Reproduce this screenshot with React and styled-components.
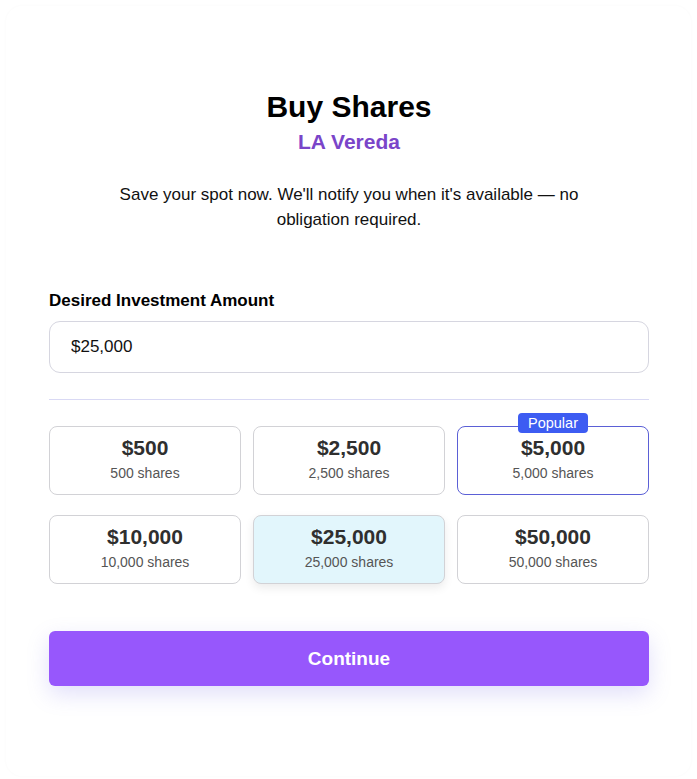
import React, { useState } from "react";
import styled, { createGlobalStyle } from "styled-components";

const GlobalStyle = createGlobalStyle`
  * { box-sizing: border-box; }
  body {
    margin: 0;
    background: #ffffff;
    font-family: "Liberation Sans", Arial, sans-serif;
    color: #111;
  }
`;

const Page = styled.div`
  width: 697px;
  min-height: 779px;
  padding: 6px;
`;

const Card = styled.div`
  border-radius: 16px;
  box-shadow: 0 0 3px rgba(0, 0, 0, 0.03);
  padding: 84px 42px 90px 43px;
  min-height: 767px;
`;

const Header = styled.div`
  display: flex;
  flex-direction: column;
  align-items: center;
  text-align: center;
`;

const Title = styled.h1`
  margin: 0;
  font-size: 30px;
  line-height: 34px;
  font-weight: 700;
  color: #000;
`;

const Subtitle = styled.h2`
  margin: 6px 0 0;
  font-size: 21px;
  line-height: 24px;
  font-weight: 700;
  color: #7a45c9;
`;

const Intro = styled.p`
  margin: 28px 0 0;
  max-width: 500px;
  font-size: 17px;
  line-height: 25px;
  color: #111;
`;

const Label = styled.label`
  display: block;
  margin-top: 59px;
  font-size: 17px;
  line-height: 20px;
  font-weight: 700;
  color: #000;
`;

const Input = styled.input`
  display: block;
  width: 100%;
  height: 52px;
  margin-top: 10px;
  padding: 0 21px;
  border: 1px solid #d6d6e0;
  border-radius: 11px;
  font-family: inherit;
  font-size: 17px;
  color: #111;
  outline: none;
`;

const Divider = styled.hr`
  margin: 26px 0 26px;
  border: 0;
  border-top: 1px solid #d9d9f4;
`;

const Grid = styled.div`
  display: grid;
  grid-template-columns: repeat(3, 1fr);
  column-gap: 12px;
  row-gap: 20px;
`;

const Option = styled.button`
  position: relative;
  height: 69px;
  display: flex;
  flex-direction: column;
  align-items: center;
  justify-content: center;
  gap: 5px;
  padding: 0 0 4px;
  border-radius: 8px;
  font-family: inherit;
  cursor: pointer;
  border: 1px solid ${({ $popular }) => ($popular ? "#5b60d6" : "#d2d2d6")};
  background: ${({ $selected }) => ($selected ? "#e2f6fc" : "#ffffff")};
  box-shadow: ${({ $selected }) =>
    $selected ? "0 4px 10px rgba(0, 0, 0, 0.08)" : "none"};
`;

const Amount = styled.span`
  font-size: 21px;
  line-height: 24px;
  font-weight: 700;
  color: #2f2f2f;
`;

const Shares = styled.span`
  font-size: 14px;
  line-height: 16px;
  color: #555;
`;

const Badge = styled.span`
  position: absolute;
  top: -14px;
  left: 50%;
  transform: translateX(-50%);
  padding: 2px 10px;
  border-radius: 4px;
  background: #3d5cf2;
  color: #fff;
  font-size: 14.5px;
  line-height: 16px;
`;

const Continue = styled.button`
  display: block;
  width: 100%;
  height: 55px;
  margin-top: 47px;
  border: 0;
  border-radius: 6px;
  background: #9757fc;
  color: #fff;
  font-family: inherit;
  font-size: 19px;
  font-weight: 700;
  cursor: pointer;
  box-shadow: 0 8px 22px rgba(120, 110, 230, 0.22);
`;

const options = [
  { amount: 500, shares: 500 },
  { amount: 2500, shares: 2500 },
  { amount: 5000, shares: 5000, popular: true },
  { amount: 10000, shares: 10000 },
  { amount: 25000, shares: 25000 },
  { amount: 50000, shares: 50000 },
];

const fmt = (n) => n.toLocaleString("en-US");

export default function App() {
  const [value, setValue] = useState(25000);

  return (
    <>
      <GlobalStyle />
      <Page>
        <Card>
          <Header>
            <Title>Buy Shares</Title>
            <Subtitle>LA Vereda</Subtitle>
            <Intro>
              Save your spot now. We'll notify you when it's available — no
              obligation required.
            </Intro>
          </Header>

          <Label htmlFor="amount">Desired Investment Amount</Label>
          <Input
            id="amount"
            value={"$" + fmt(value)}
            onChange={(e) => {
              const n = parseInt(e.target.value.replace(/[^0-9]/g, ""), 10);
              setValue(isNaN(n) ? 0 : n);
            }}
          />

          <Divider />

          <Grid>
            {options.map((o) => (
              <Option
                key={o.amount}
                $popular={o.popular}
                $selected={o.amount === value}
                onClick={() => setValue(o.amount)}
              >
                {o.popular && <Badge>Popular</Badge>}
                <Amount>${fmt(o.amount)}</Amount>
                <Shares>{fmt(o.shares)} shares</Shares>
              </Option>
            ))}
          </Grid>

          <Continue>Continue</Continue>
        </Card>
      </Page>
    </>
  );
}
